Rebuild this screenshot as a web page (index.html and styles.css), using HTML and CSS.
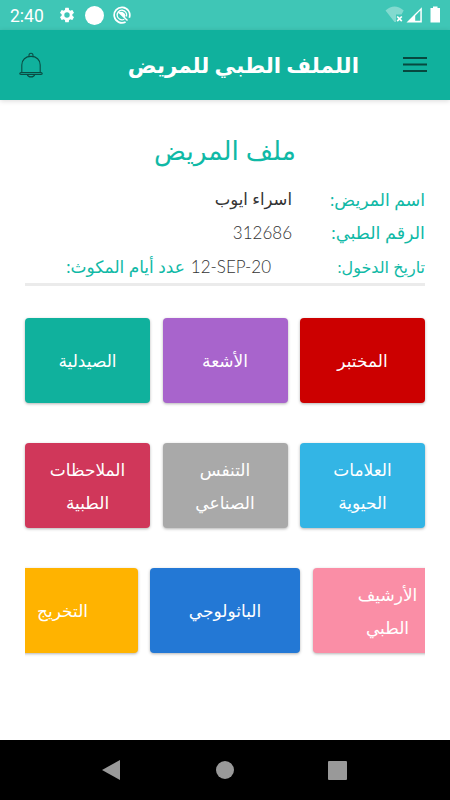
FILE: index.html
```html
<!DOCTYPE html>
<html lang="ar" dir="rtl">
<head>
    <meta charset="UTF-8">
    <meta name="viewport" content="width=device-width, initial-scale=1.0">
    <title>الملف الطبي للمريض</title>
    <link rel="stylesheet" href="styles.css">
</head>
<body>

    <div class="status-bar" dir="ltr">
        <span class="time">2:40</span>
        <svg class="gear" width="18" height="18" viewBox="0 0 24 24" fill="#fff">
            <path d="M19.14 12.94c.04-.3.06-.61.06-.94s-.02-.64-.07-.94l2.03-1.58a.49.49 0 0 0 .12-.61l-1.92-3.32a.49.49 0 0 0-.59-.22l-2.39.96c-.5-.38-1.03-.7-1.62-.94l-.36-2.54a.48.48 0 0 0-.48-.41h-3.84a.47.47 0 0 0-.47.41l-.36 2.54c-.59.24-1.13.57-1.62.94l-2.39-.96a.48.48 0 0 0-.59.22L2.74 8.87a.48.48 0 0 0 .12.61l2.03 1.58c-.05.3-.09.63-.09.94s.02.64.07.94l-2.03 1.58a.49.49 0 0 0-.12.61l1.92 3.32c.12.22.37.29.59.22l2.39-.96c.5.38 1.03.7 1.62.94l.36 2.54c.05.24.24.41.48.41h3.84c.24 0 .44-.17.47-.41l.36-2.54c.59-.24 1.13-.56 1.62-.94l2.39.96c.22.08.47 0 .59-.22l1.92-3.32a.48.48 0 0 0-.12-.61zM12 15.6a3.6 3.6 0 1 1 0-7.2 3.6 3.6 0 0 1 0 7.2z"/>
        </svg>
        <span class="dot"></span>
        <svg class="app" width="18" height="18" viewBox="0 0 18 18" fill="none" stroke="#fff">
            <path d="M12.600 16A7.800 7.800 0 1 1 16.300 11.800" stroke-width="1.700"/>
            <path d="M11.300 13.200A4.800 4.800 0 1 1 13.500 10.500" stroke-width="1.300"/>
            <path d="M6 6.500C8 5 11.500 6 12.500 9.500L12 12z" fill="#fff" stroke="none"/>
            <path d="M5.500 6l9 8.500" stroke-width="1.500"/>
        </svg>
        <svg class="signals" width="56" height="18" viewBox="0 0 56 18">
            <path d="M.5 4.500Q9.500-3.500 18.700 4.500L16.500 8.500H11v7.500L9.500 16z" fill="#fff" opacity=".35"/>
            <path d="M12.200 10.500l4.600 4.600M16.800 10.500l-4.600 4.600" stroke="#fff" stroke-width="1.700"/>
            <path d="M21.500 16.500L36.800 1.300V16.500z" fill="#fff"/>
            <path d="M30.200 9.700L35.300 4.500v10.300h-5.100z" fill="#3fc6b6"/>
            <path d="M45.500 2H48V.5h4.500V2H55v14.500h-9.500z" fill="#fff"/>
        </svg>
    </div>

    <div class="header">
        <svg class="menu" width="24" height="18" viewBox="0 0 24 18" stroke="#07483f" stroke-width="2">
            <path d="M0 2h24M0 8.500h24M0 15h24"/>
        </svg>
        <h1>اللملف الطبي للمريض</h1>
        <svg class="bell" width="24" height="27" viewBox="0 0 24 27" fill="none" stroke="#0a4d44" stroke-width="1.100">
            <path d="M10 5V3.300a2 2 0 0 1 4 0V5"/>
            <path d="M2.800 20.300V13c0-5.200 3.800-8.600 9.200-8.600s9.200 3.400 9.200 8.600v7.300"/>
            <path d="M2.500 20.500h19c2 0 2.300 1.900.5 1.900H2c-1.800 0-1.500-1.900.5-1.900z"/>
            <path d="M8.300 22.500c.8 3.200 6.600 3.200 7.400 0"/>
        </svg>
    </div>

    <div class="container">
        <h2>ملف المريض</h2>

        <div class="info">
            <div class="row name"><span class="label">اسم المريض:</span><span class="value">اسراء ايوب</span></div>
            <div class="row number"><span class="label">الرقم الطبي:</span><span class="value">312686</span></div>
            <div class="row date">
                <span class="label">تاريخ الدخول:</span>
                <span class="value" dir="ltr">12-SEP-20</span>
                <span class="days">عدد أيام المكوث:</span>
            </div>
        </div>

        <div class="cards">
            <div class="card red">المختبر</div>
            <div class="card purple">الأشعة</div>
            <div class="card green">الصيدلية</div>
        </div>
        <div class="cards">
            <div class="card sky">العلامات<br>الحيوية</div>
            <div class="card gray">التنفس<br>الصناعي</div>
            <div class="card crimson">الملاحظات<br>الطبية</div>
        </div>
        <div class="cards wide">
            <div class="card pink">الأرشيف<br>الطبي</div>
            <div class="card blue">الباثولوجي</div>
            <div class="card amber">التخريج</div>
        </div>
    </div>

    <div class="nav-bar" dir="ltr">
        <svg width="18" height="20" viewBox="0 0 18 20"><path d="M18 0v20L0 10z" fill="#999"/></svg>
        <span class="home"></span>
        <span class="recent"></span>
    </div>

</body>
</html>
```
FILE: styles.css
```css
* {
    box-sizing: border-box;
}
body {
    margin: 0;
    height: 800px;
    display: flex;
    flex-direction: column;
    overflow: hidden;
    background-color: #fff;
    color: #333;
    font-family: Lato, "DejaVu Sans", sans-serif;
}
h1, h2 {
    margin: 0;
    white-space: nowrap;
}
.status-bar {
    height: 30px;
    flex: none;
    display: flex;
    align-items: center;
    padding: 0 9px 0 10px;
    background-color: #3fc6b6;
    color: #fff;
}
.time {
    width: 48px;
    font-family: Roboto, sans-serif;
    font-size: 17.5px;
    line-height: 30px;
    padding-top: 1px;
}
.dot {
    width: 19px;
    height: 19px;
    margin: 0 9px;
    border-radius: 50%;
    background-color: #fff;
}
.signals {
    margin-left: auto;
}
.header {
    height: 70px;
    flex: none;
    display: flex;
    align-items: center;
    padding: 0 23px 0 19px;
    background-color: #10b19d;
    box-shadow: 0 1px 5px rgba(0, 0, 0, 0.15);
}
.header h1 {
    flex: 1;
    padding-right: 44px;
    color: #fff;
    font-size: 21.4px;
    line-height: 30px;
}
.container {
    flex: 1;
    padding: 30px 25px 0;
}
h2 {
    text-align: center;
    color: #10b9a6;
    font-size: 26.4px;
    font-weight: normal;
    line-height: 40px;
}
.info {
    height: 103px;
    margin-top: 13px;
    border-bottom: 3px solid #ebebeb;
}
.row {
    display: flex;
    height: 33.3px;
    line-height: 33.3px;
    font-size: 17px;
    white-space: nowrap;
}
.label {
    width: 133px;
}
.label, .days {
    color: #10b9a6;
}
.name .label {
    font-size: 17.3px;
}
.number .label {
    font-size: 17.6px;
}
.date .label {
    width: 154px;
    font-size: 16px;
}
.name .value {
    font-size: 16.5px;
}
.number .value, .date .value {
    font-weight: 300;
}
.days {
    margin-right: 6px;
}
.cards {
    display: flex;
    justify-content: center;
    gap: 12.5px;
    height: 125px;
    padding-top: 32px;
}
.card {
    flex: none;
    width: 125px;
    height: 85px;
    display: flex;
    align-items: center;
    justify-content: center;
    border-radius: 4px;
    box-shadow: 0 1px 3px rgba(0, 0, 0, 0.3);
    color: #fff;
    font-size: 17px;
    line-height: 33px;
    text-align: center;
}
.wide {
    overflow: hidden;
}
.wide .card {
    width: 150px;
}
.red { background-color: #cc0000; }
.purple { background-color: #a864cc; }
.green { background-color: #10b19d; }
.sky { background-color: #33b5e5; }
.gray { background-color: #a9a9a9; }
.crimson { background-color: #d0375a; }
.pink { background-color: #fa8ea6; }
.blue { background-color: #2378d5; }
.amber { background-color: #ffb300; }
.nav-bar {
    height: 60px;
    flex: none;
    display: flex;
    align-items: center;
    justify-content: center;
    gap: 96px;
    padding-right: 1px;
    background-color: #000;
}
.home {
    width: 18px;
    height: 18px;
    border-radius: 50%;
    background-color: #999;
}
.recent {
    width: 19px;
    height: 19px;
    margin-left: -2px;
    border-radius: 1px;
    background-color: #999;
}
```
